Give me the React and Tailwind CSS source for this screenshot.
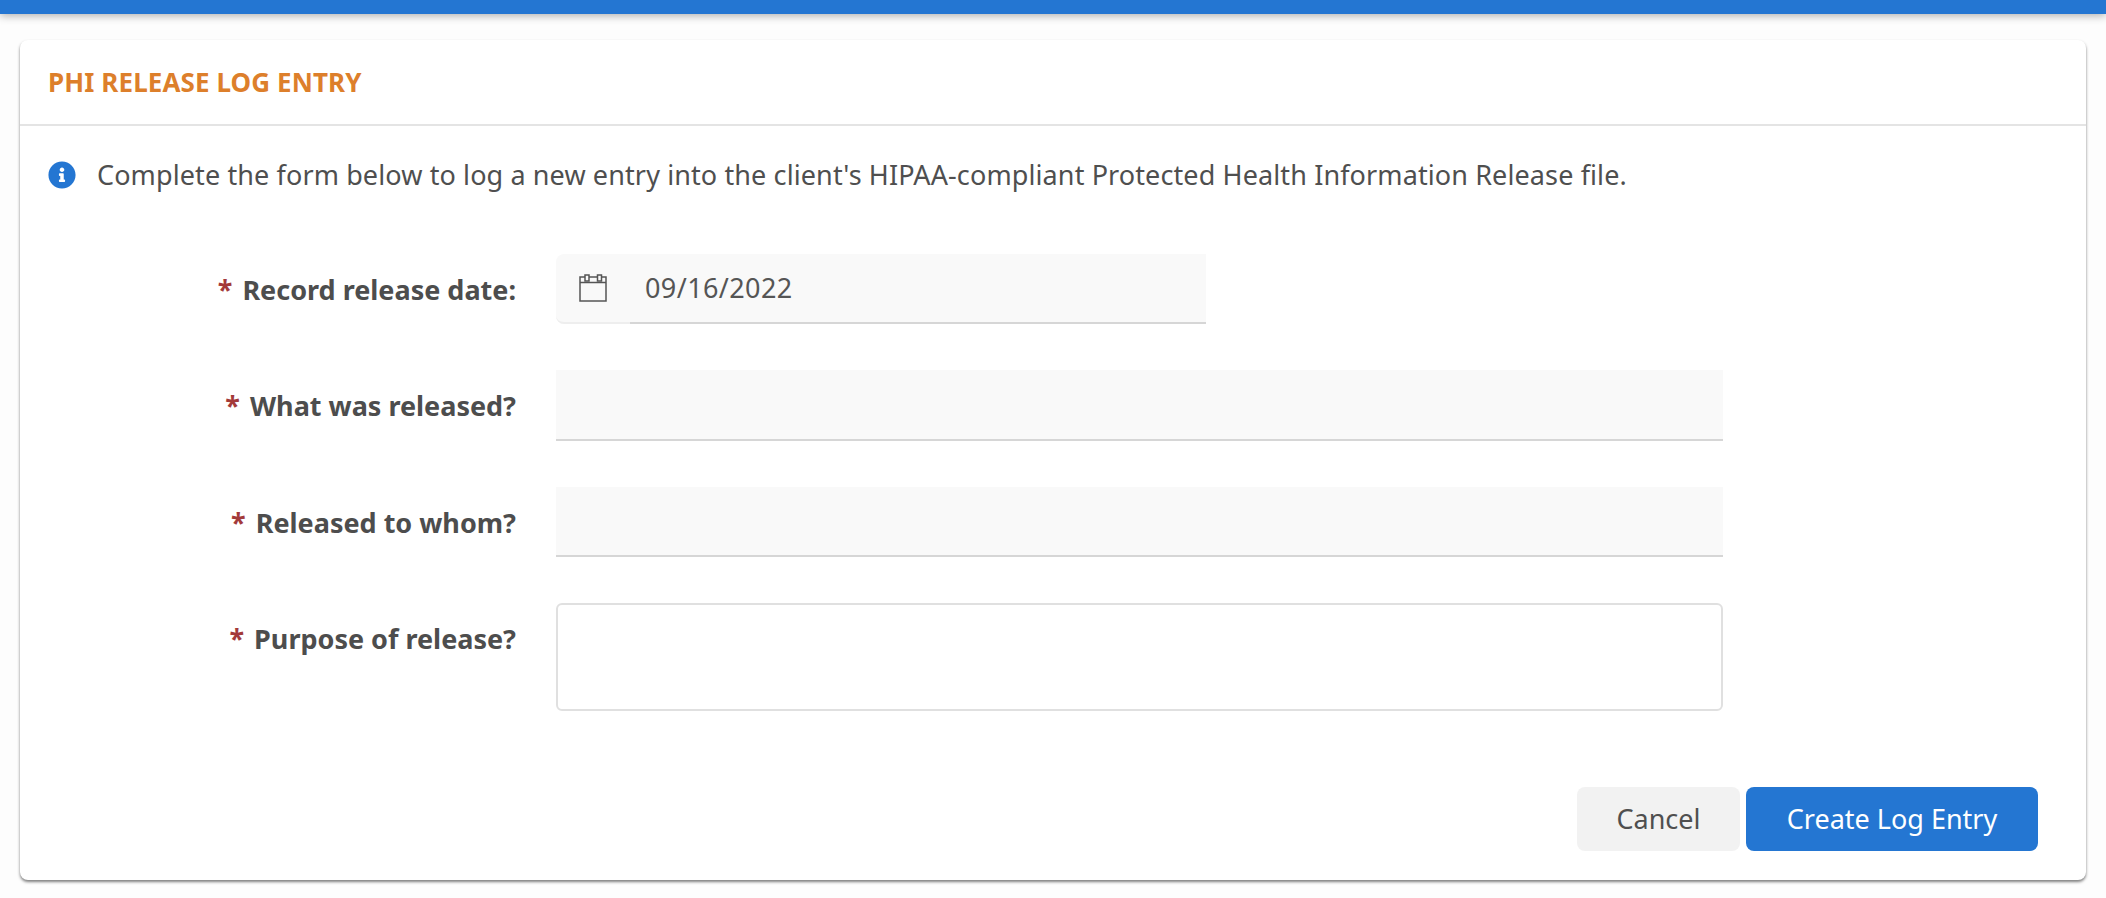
import { FaInfoCircle } from 'react-icons/fa';

function Label({ children }) {
  return (
    <label className="w-[496px] shrink-0 pt-[18px] text-right text-[27px] leading-[36px] font-bold text-[#4d4d4d]">
      <span className="mr-[10px] text-[#a33a3a]">*</span>
      {children}
    </label>
  );
}

function CalendarIcon() {
  return (
    <svg width="28" height="28" viewBox="0 0 28 28" fill="none" stroke="#555" strokeWidth="1.5">
      <rect x="1" y="3" width="26" height="24" />
      <path d="M1 8.5h26" />
      <rect x="6" y="1" width="4" height="6" fill="#f9f9f9" />
      <rect x="18.5" y="1" width="4" height="6" fill="#f9f9f9" />
    </svg>
  );
}

export default function App() {
  return (
    <div className="min-h-[898px] bg-[#fdfdfd] font-['Noto_Sans',sans-serif] text-[#4f4f4f]">
      {/* Top bar */}
      <div className="h-[14px] bg-[#2476d2] shadow-[0_2px_8px_rgba(0,0,0,0.3)]" />

      <div className="pt-[26px] pl-[20px]">
        <div className="h-[840px] w-[2066px] rounded-[8px] bg-white shadow-[0_2px_3px_rgba(0,0,0,0.5)]">
          {/* Header */}
          <div className="flex h-[86px] items-center border-b-2 border-[#e4e4e4] pl-[28px]">
            <h2 className="text-[26px] font-bold tracking-[0.1px] text-[#dd7f2b]">PHI RELEASE LOG ENTRY</h2>
          </div>

          {/* Intro */}
          <div className="flex h-[98px] items-center pl-[28px]">
            <FaInfoCircle size={28} color="#2476d2" />
            <p className="ml-[21px] text-[27px] tracking-[0.11px]">
              Complete the form below to log a new entry into the client's HIPAA-compliant Protected Health Information Release file.
            </p>
          </div>

          {/* Form */}
          <div className="flex flex-col gap-[46px] pt-[30px]">
            <div className="flex gap-[40px]">
              <Label>Record release date:</Label>
              <div className="flex h-[70px] w-[650px] items-center rounded-tl-[8px] rounded-bl-[8px] bg-[#f9f9f9]">
                <div className="flex h-full w-[74px] items-center justify-center rounded-bl-[8px] border-b-2 border-[#eeeeee]">
                  <CalendarIcon />
                </div>
                <div className="flex h-full flex-1 items-center border-b-2 border-[#d6d6d6] pl-[15px] text-[27px] tracking-[0.4px] text-[#555555]">
                  09/16/2022
                </div>
              </div>
            </div>

            <div className="flex gap-[40px]">
              <Label>What was released?</Label>
              <div className="h-[71px] w-[1167px] border-b-2 border-[#d6d6d6] bg-[#f9f9f9]" />
            </div>

            <div className="flex gap-[40px]">
              <Label>Released to whom?</Label>
              <div className="h-[70px] w-[1167px] border-b-2 border-[#d6d6d6] bg-[#f9f9f9]" />
            </div>

            <div className="flex gap-[40px]">
              <Label>Purpose of release?</Label>
              <div className="h-[108px] w-[1167px] rounded-[6px] border-2 border-[#e0e0e0] bg-white" />
            </div>
          </div>

          {/* Footer */}
          <div className="flex justify-end gap-[6px] pt-[76px] pr-[48px]">
            <button className="h-[64px] w-[163px] rounded-[8px] bg-[#f2f2f2] text-[27px] text-[#4f4f4f]">Cancel</button>
            <button className="h-[64px] w-[292px] rounded-[8px] bg-[#2476d2] text-[27px] text-white">Create Log Entry</button>
          </div>
        </div>
      </div>
    </div>
  );
}
